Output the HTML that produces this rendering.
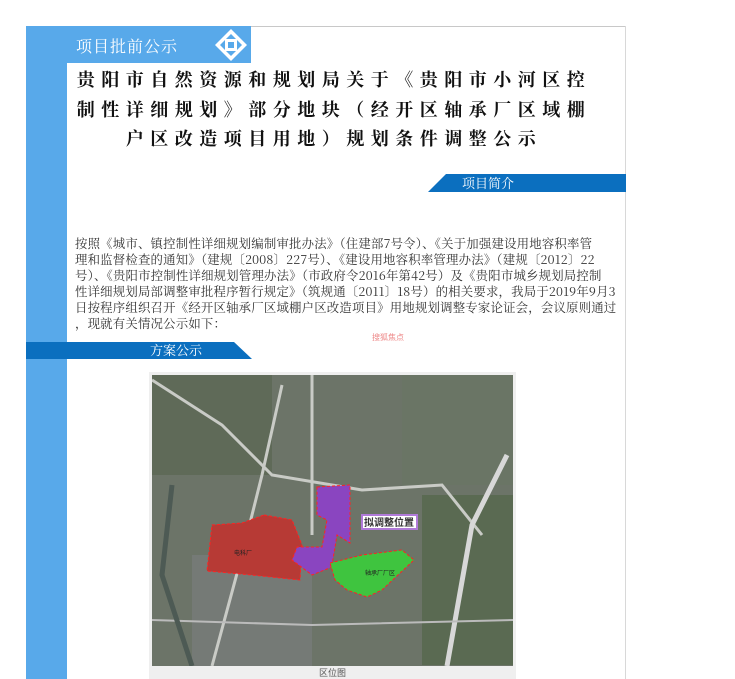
<!DOCTYPE html>
<html><head><meta charset="utf-8"><style>
*{margin:0;padding:0}
body{width:735px;height:679px;background:#fff;position:relative;overflow:hidden;font-family:"Liberation Serif","Noto Serif CJK SC",serif}
.abs{position:absolute}
.t{position:absolute;left:14px;width:640px;text-align:center;font-family:"Noto Serif CJK SC","WenQuanYi Zen Hei",serif;font-weight:700;font-size:18px;letter-spacing:6.5px;color:#111;white-space:nowrap}
.p{position:absolute;left:75px;font-size:12.4px;letter-spacing:0.2px;line-height:16px;color:#333;white-space:nowrap;font-family:"Noto Serif CJK SC",serif}
</style></head><body>
<div class="abs" style="left:251px;top:26px;width:375px;height:1px;background:#c8c8c8"></div>
<div class="abs" style="left:625px;top:26px;width:1px;height:653px;background:#d8d8d8"></div>
<div class="abs" style="left:26px;top:26px;width:41px;height:653px;background:#58a9ea"></div>
<div class="abs" style="left:26px;top:26px;width:225px;height:37px;background:#58a9ea"></div>
<div class="abs" style="left:67px;top:63px;width:40px;height:40px;background:#fff;border-top-left-radius:24px"></div>
<div class="abs" style="left:76px;top:34px;color:#fff;font-size:16px;font-family:'Noto Serif CJK SC',serif;letter-spacing:1px">项目批前公示</div>
<svg class="abs" style="left:212px;top:27px" width="38" height="36" viewBox="0 0 38 36">
<path d="M19 2 L35 18 L19 34 L3 18 Z" fill="#fff"/>
<path d="M19 7 L30 18 L19 29 L8 18 Z" fill="#58a9ea"/>
<rect x="13" y="12" width="12" height="12" fill="#fff"/>
<rect x="16" y="15" width="6" height="6" fill="#58a9ea"/>
</svg>
<div class="t" style="top:66px">贵阳市自然资源和规划局关于《贵阳市小河区控</div>
<div class="t" style="top:96px">制性详细规划》部分地块（经开区轴承厂区域棚</div>
<div class="t" style="top:125px">户区改造项目用地）规划条件调整公示</div>
<svg class="abs" style="left:428px;top:174px" width="198" height="18"><path d="M18 0 H198 V18 H0 Z" fill="#0b6fbf"/></svg>
<div class="abs" style="left:462px;top:174px;color:#fff;font-size:13px;line-height:18px;font-family:'Noto Serif CJK SC',serif">项目简介</div>
<div class="p" style="top:235px">按照《城市、镇控制性详细规划编制审批办法》（住建部7号令）、《关于加强建设用地容积率管<br>理和监督检查的通知》（建规〔2008〕227号）、《建设用地容积率管理办法》（建规〔2012〕22<br>号）、《贵阳市控制性详细规划管理办法》（市政府令2016年第42号）及《贵阳市城乡规划局控制<br>性详细规划局部调整审批程序暂行规定》（筑规通〔2011〕18号）的相关要求，我局于2019年9月3<br>日按程序组织召开《经开区轴承厂区域棚户区改造项目》用地规划调整专家论证会，会议原则通过<br>，现就有关情况公示如下：</div>
<div class="abs" style="left:372px;top:332px;color:#e88;font-size:8px;font-family:'Noto Sans CJK SC',sans-serif">搜狐焦点</div>
<svg class="abs" style="left:26px;top:342px" width="226" height="17"><path d="M0 0 H208 L226 17 H0 Z" fill="#0b6fbf"/></svg>
<div class="abs" style="left:150px;top:341px;color:#fff;font-size:13px;line-height:18px;font-family:'Noto Serif CJK SC',serif">方案公示</div>
<div class="abs" style="left:149px;top:372px;width:367px;height:307px;background:#efefef"></div>
<svg class="abs" style="left:152px;top:375px" width="361" height="291" viewBox="0 0 361 291">
<rect width="361" height="291" fill="#6c7468"/>
<rect x="0" y="0" width="120" height="100" fill="#5f6a58"/>
<rect x="250" y="0" width="111" height="110" fill="#6a7565"/>
<rect x="270" y="120" width="91" height="170" fill="#5a6a52"/>
<rect x="40" y="180" width="120" height="111" fill="#757a76"/>
<path d="M0 5 L70 50 L120 100 L210 115 L290 110 L330 160" stroke="#c9cbc6" stroke-width="3" fill="none"/>
<path d="M160 0 L160 160" stroke="#c9cbc6" stroke-width="3"/>
<path d="M130 10 L110 100 L90 180 L60 291" stroke="#c9cbc6" stroke-width="3" fill="none"/>
<path d="M355 80 L320 150 L295 291" stroke="#d8d8d8" stroke-width="5" fill="none"/>
<path d="M0 245 L160 250 L361 245" stroke="#bbb" stroke-width="2" fill="none"/>
<path d="M20 110 L10 200 L40 291" stroke="#4d5a54" stroke-width="5" fill="none"/>
<path d="M112 140 L140 145 L150 170 L148 205 L100 200 L55 196 L60 150 L90 148 Z" fill="#b73a35" stroke="#f22" stroke-width="1" stroke-dasharray="3 2"/>
<path d="M165 112 L198 110 L198 168 L185 160 L180 190 L210 180 L160 200 L140 185 L145 172 L170 172 L175 145 L165 140 Z" fill="#8a45c0" stroke="#f22" stroke-width="1" stroke-dasharray="3 2"/>
<path d="M178 188 L210 180 L250 175 L262 185 L230 215 L215 222 L195 215 L183 205 Z" fill="#3fc43f" stroke="#f22" stroke-width="1" stroke-dasharray="3 2"/>
<rect x="210" y="140" width="55" height="14" fill="#fff" stroke="#b07ad8" stroke-width="2"/>
<text x="237" y="151" font-size="10" text-anchor="middle" font-family="Noto Sans CJK SC,sans-serif" font-weight="bold" fill="#333">拟调整位置</text>
<text x="82" y="180" font-size="6" font-family="Noto Sans CJK SC,sans-serif" fill="#222">电科厂</text>
<text x="213" y="200" font-size="6" font-family="Noto Sans CJK SC,sans-serif" fill="#222">轴承厂厂区</text>
</svg>
<div class="abs" style="left:149px;top:666px;width:367px;text-align:center;font-size:9px;color:#555;font-family:'Noto Sans CJK SC',sans-serif">区位图</div>
</body></html>
